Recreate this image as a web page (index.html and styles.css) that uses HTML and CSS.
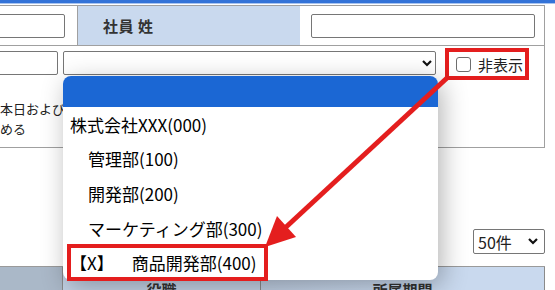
FILE: index.html
```html
<!DOCTYPE html>
<html lang="ja">
<head>
    <meta charset="UTF-8">
    <title>社員検索</title>
    <link rel="stylesheet" href="styles.css">
</head>
<body>
    <div class="topbar"></div>

    <div class="form">
        <div class="row row-name">
            <div class="cell cell-first"><input class="text text-first" type="text"></div>
            <div class="cell cell-head">社員 姓</div>
            <div class="cell cell-last"><input class="text text-wide" type="text"></div>
        </div>
        <div class="row row-dept">
            <div class="dept-left">
                <input class="text text-small" type="text">
                <p class="note">本日および退職<br>める</p>
            </div>
            <div class="select dept-select">
                <span class="select-value"></span>
                <svg class="chevron" width="10" height="7" viewBox="0 0 10 7"><polyline points="1,1 5,5 9,1"/></svg>
            </div>
            <label class="hide-check">
                <input type="checkbox">
                <span>非表示</span>
            </label>
        </div>
    </div>

    <div class="pager">
        <div class="select per-page">
            <span class="select-value">50件</span>
            <svg class="chevron" width="10" height="7" viewBox="0 0 10 7"><polyline points="1,1 5,5 9,1"/></svg>
        </div>
    </div>

    <div class="list-head">
        <div class="th th-first"></div>
        <div class="th th-role">役職</div>
        <div class="th th-period">所属期間</div>
    </div>

    <!-- open dropdown of the department select -->
    <div class="dropdown">
        <div class="option selected"></div>
        <div class="option">株式会社XXX(000)</div>
        <div class="option child">管理部(100)</div>
        <div class="option child">開発部(200)</div>
        <div class="option child">マーケティング部(300)</div>
        <div class="option hidden-dept">
            <span class="flag">【X】</span>商品開発部(400)
            <span class="mark"></span>
        </div>
    </div>

    <!-- annotation arrow -->
    <svg class="arrow" width="555" height="290" viewBox="0 0 555 290">
        <line x1="447" y1="78" x2="285" y2="228"/>
        <polygon points="265,247 277,216 296,237"/>
    </svg>
</body>
</html>
```

FILE: styles.css
```css
* {
    margin: 0;
    padding: 0;
    box-sizing: border-box;
}

body {
    font-family: "Noto Sans CJK JP", "Noto Sans", sans-serif;
    color: #222;
    background: #fff;
    width: 555px;
    height: 290px;
    overflow: hidden;
    position: relative;
}

.topbar {
    height: 5px;
    background: linear-gradient(#3373d8 0, #3373d8 3px, #a9c4ef 3px, #a9c4ef 4px, #fff 4px);
}

/* Search form */
.form {
    width: 545px;
    border-top: 1px solid #a0a0a0;
    border-right: 1px solid #a0a0a0;
}

.row {
    display: flex;
    border-bottom: 1px solid #a0a0a0;
}

.row-name {
    height: 40px;
}

.cell {
    display: flex;
    align-items: center;
}

.cell-first {
    width: 78px;
    border-right: 1px solid #a0a0a0;
}

.cell-head {
    width: 222px;
    background: #c9d9ee;
    padding-left: 25px;
    font-size: 15px;
    font-weight: bold;
    color: #333;
    letter-spacing: 0.5px;
}

.cell-last {
    flex: 1;
    padding-left: 11px;
    padding-right: 9px;
}

.text {
    height: 24px;
    border: 1px solid #767676;
    border-radius: 2px;
    background: #fff;
}

.text-first {
    width: 81px;
    margin-left: -16px;
}

.text-wide {
    width: 100%;
}

.row-dept {
    align-items: flex-start;
    padding-top: 5px;
    padding-bottom: 8px;
}

.dept-left {
    width: 63px;
}

.text-small {
    width: 69px;
    margin-left: -11px;
    display: block;
}

.note {
    width: 63px;
    overflow: hidden;
    margin-top: 24px;
    font-size: 13px;
    line-height: 20px;
    white-space: nowrap;
}

.select {
    display: flex;
    align-items: center;
    justify-content: space-between;
    height: 24px;
    border: 1px solid #767676;
    border-radius: 2px;
    background: #fff;
}

.dept-select {
    width: 373px;
    padding-right: 3px;
}

.chevron polyline {
    fill: none;
    stroke: #111;
    stroke-width: 2.2;
}

.hide-check {
    display: flex;
    align-items: center;
    gap: 7px;
    width: 84px;
    height: 32px;
    margin-left: 9px;
    margin-top: -3px;
    padding-left: 7px;
    border: 4px solid #e41e1e;
    font-size: 15px;
    color: #222;
}

.hide-check input {
    appearance: none;
    width: 15px;
    height: 15px;
    border: 1px solid #6e6e6e;
    border-radius: 3px;
    background: #fff;
}

/* Paging */
.pager {
    width: 545px;
    display: flex;
    justify-content: flex-end;
    padding-top: 81px;
    padding-bottom: 12px;
}

.per-page {
    width: 72px;
    height: 25px;
    padding-left: 4px;
    padding-right: 6px;
    font-size: 16px;
}

/* List header */
.list-head {
    display: flex;
    width: 545px;
    height: 30px;
    border-top: 1px solid #9a9a9a;
}

.th {
    padding-top: 12px;
    font-size: 15px;
    font-weight: bold;
    color: #333;
    text-align: center;
    border-right: 1px solid #8a8a8a;
    line-height: 22px;
}

.th-first {
    width: 63px;
    background: #aab8c8;
}

.th-role {
    width: 198px;
    background: #c3d2e5;
}

.th-period {
    flex: 1;
    background: linear-gradient(90deg, #bfcee2, #c9d9ee 40%);
}

/* Dropdown */
.dropdown {
    position: absolute;
    top: 76px;
    left: 63px;
    width: 375px;
    height: 204px;
    background: #fff;
    border-radius: 8px;
    box-shadow: 4px 6px 26px rgba(0, 0, 0, 0.3);
    z-index: 5;
}

.option {
    position: relative;
    display: flex;
    align-items: center;
    height: 34.6px;
    padding-left: 7px;
    font-size: 17px;
    color: #000;
    white-space: nowrap;
}

.option.selected {
    height: 31px;
    background: #1b67d4;
    border-radius: 8px 8px 0 0;
}

.option.child {
    padding-left: 25px;
}

.flag {
    margin-right: 18px;
}

.mark {
    position: absolute;
    left: 4px;
    top: -1px;
    width: 201px;
    height: 37px;
    border: 4px solid #e41e1e;
}

/* Annotation arrow */
.arrow {
    position: absolute;
    top: 0;
    left: 0;
    z-index: 10;
    pointer-events: none;
}

.arrow line {
    stroke: #e41e1e;
    stroke-width: 5;
}

.arrow polygon {
    fill: #e41e1e;
}
```
